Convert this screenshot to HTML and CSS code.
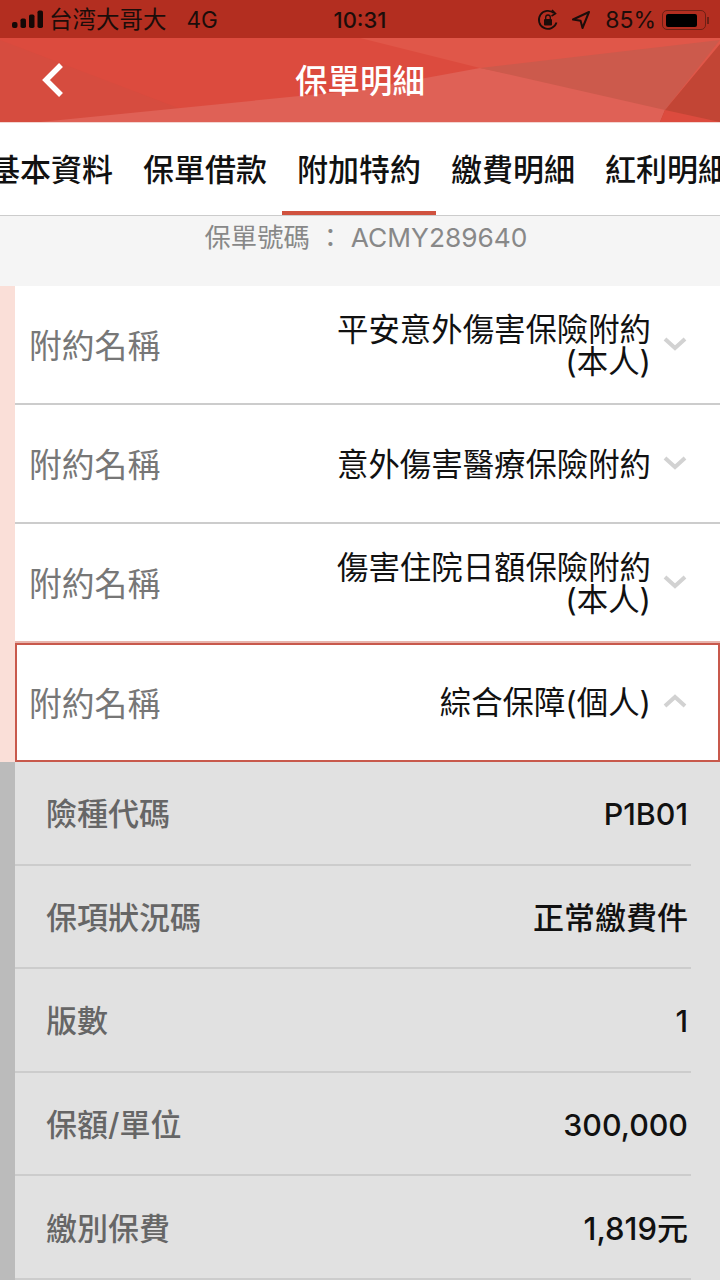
FILE: index.html
```html
<!DOCTYPE html>
<html lang="zh-Hant">
<head>
    <meta charset="UTF-8">
    <meta name="viewport" content="width=device-width, initial-scale=1.0">
    <title>保單明細</title>
    <link rel="stylesheet" href="styles.css">
</head>
<body>
    <div class="status-bar">
        <div class="status-left">
            <svg class="signal" width="32" height="20" viewBox="0 0 32 20">
                <rect x="0" y="12" width="5.5" height="6" rx="2"/>
                <rect x="8.5" y="8.5" width="5.5" height="9.5" rx="1.8"/>
                <rect x="17" y="4.5" width="5.5" height="13.5" rx="1.8"/>
                <rect x="25.5" y="0.5" width="5.5" height="17.5" rx="1.8"/>
            </svg>
            <span class="carrier">台湾大哥大</span>
            <span class="network">4G</span>
        </div>
        <div class="status-time">10:31</div>
        <div class="status-right">
            <svg width="22" height="22" viewBox="0 0 22 22" fill="none" stroke="#1c0d0a" stroke-width="1.8">
                <path d="M19.5 13.5A9 9 0 1 1 17 4.2"/>
                <path d="M15 1l3.5 3.6L14.5 7" stroke-width="1.6"/>
                <rect x="7" y="10" width="8" height="6.5" rx="1" fill="#1c0d0a" stroke="none"/>
                <path d="M8.7 10V8.3a2.3 2.3 0 0 1 4.6 0V10" stroke-width="1.3"/>
            </svg>
            <svg class="arrow" width="20" height="20" viewBox="0 0 20 20" fill="none" stroke="#1c0d0a" stroke-width="2" stroke-linejoin="round">
                <path d="M18 2L2 9.5l7.6 1.2L11.5 18z"/>
            </svg>
            <span class="battery-pct">85%</span>
            <div class="battery"><div class="battery-fill"></div></div>
            <div class="battery-tip"></div>
        </div>
    </div>

    <header class="app-header">
        <svg class="header-bg" width="720" height="84" viewBox="0 0 720 84">
            <polygon points="0,2 215,84 40,84 0,84" fill="#d64c3f"/>
            <polygon points="360,0 720,0 720,80 480,30" fill="#e05749"/>
            <polygon points="40,84 360,52 480,30 720,78 720,84" fill="#df6156"/>
            <polygon points="480,30 720,2 665,72" fill="#cc5a4c"/>
            <polygon points="720,6 665,72 660,84 720,84" fill="#c24535"/>
            <polygon points="665,72 720,84 660,84" fill="#dc4b3e"/>
        </svg>
        <svg class="back" width="26" height="36" viewBox="0 0 26 36" fill="none" stroke="#fff" stroke-width="5.5">
            <path d="M21 3L6 18l15 15"/>
        </svg>
        <h1 class="title">保單明細</h1>
    </header>

    <nav class="tabs">
        <div class="tab">基本資料</div>
        <div class="tab">保單借款</div>
        <div class="tab active">附加特約</div>
        <div class="tab">繳費明細</div>
        <div class="tab">紅利明細</div>
    </nav>

    <div class="policy-no">保單號碼 ： ACMY289640</div>

    <div class="rider-list">
        <div class="rider">
            <div class="rider-label">附約名稱</div>
            <div class="rider-value">平安意外傷害保險附約<br>(本人)</div>
            <svg class="chevron" width="24" height="14" viewBox="0 0 24 14"><path d="M2 2l10 9 10-9"/></svg>
        </div>
        <div class="rider">
            <div class="rider-label">附約名稱</div>
            <div class="rider-value">意外傷害醫療保險附約</div>
            <svg class="chevron" width="24" height="14" viewBox="0 0 24 14"><path d="M2 2l10 9 10-9"/></svg>
        </div>
        <div class="rider before-open">
            <div class="rider-label">附約名稱</div>
            <div class="rider-value">傷害住院日額保險附約<br>(本人)</div>
            <svg class="chevron" width="24" height="14" viewBox="0 0 24 14"><path d="M2 2l10 9 10-9"/></svg>
        </div>
        <div class="rider open">
            <div class="rider-label">附約名稱</div>
            <div class="rider-value">綜合保障(個人)</div>
            <svg class="chevron" width="24" height="14" viewBox="0 0 24 14"><path d="M2 12l10-9 10 9"/></svg>
        </div>
    </div>

    <div class="details">
        <div class="detail-row"><span class="detail-label">險種代碼</span><span class="detail-value num">P1B01</span></div>
        <div class="detail-row"><span class="detail-label">保項狀況碼</span><span class="detail-value">正常繳費件</span></div>
        <div class="detail-row"><span class="detail-label">版數</span><span class="detail-value num">1</span></div>
        <div class="detail-row"><span class="detail-label">保額/單位</span><span class="detail-value num">300,000</span></div>
        <div class="detail-row"><span class="detail-label">繳別保費</span><span class="detail-value">1,819元</span></div>
    </div>
</body>
</html>
```

FILE: styles.css
```css
html, body {
    margin: 0;
    padding: 0;
}

body {
    width: 720px;
    height: 1280px;
    overflow: hidden;
    background: #fff;
    font-family: Inter, "Noto Sans CJK TC", sans-serif;
}

.status-bar {
    height: 38px;
    background: #b32e20;
    color: #1c0d0a;
    display: grid;
    grid-template-columns: 1fr auto 1fr;
    align-items: center;
    padding: 2px 12px 0;
    box-sizing: border-box;
}

.status-left {
    display: flex;
    align-items: center;
}

.signal { fill: #140806; }

.carrier {
    font-size: 23.5px;
    margin-left: 5px;
    line-height: 36px;
}

.network {
    font-size: 22.5px;
    margin-left: 20px;
    line-height: 36px;
}

.status-time {
    font-size: 22px;
    font-weight: 500;
}

.status-right {
    display: flex;
    align-items: center;
    justify-content: flex-end;
    margin-right: -1px;
}

.arrow { margin-left: 12px; }

.battery-pct {
    font-size: 23px;
    margin-left: 14px;
}

.battery {
    width: 44px;
    height: 20px;
    margin-left: 6px;
    box-sizing: border-box;
    border: 1.5px solid #6e2015;
    border-radius: 5px;
    padding: 2.5px;
}

.battery-fill {
    width: 85%;
    height: 100%;
    background: #000;
    border-radius: 2px;
}

.battery-tip {
    width: 2px;
    height: 7px;
    margin-left: 1px;
    background: #6e2015;
}

.app-header {
    position: relative;
    height: 84px;
    background: #dc4b3e;
    border-bottom: 1px solid #f3d6d2;
    display: flex;
    align-items: center;
    justify-content: center;
    overflow: hidden;
}

.header-bg {
    position: absolute;
    left: 0;
    top: 0;
}

.back {
    position: absolute;
    left: 40px;
    top: 24px;
}

.title {
    position: relative;
    margin: 0;
    padding-top: 4px;
    color: #fff;
    font-size: 32.5px;
    font-weight: 500;
    line-height: 80px;
}

.tabs {
    height: 92px;
    display: flex;
    border-bottom: 1px solid #ccc;
    margin-left: -26px;
    overflow: hidden;
}

.tab {
    flex: none;
    width: 124px;
    padding: 0 15px;
    margin-bottom: -1px;
    font-size: 31px;
    font-weight: 500;
    line-height: 94px;
    color: #111;
    white-space: nowrap;
    text-align: center;
    box-sizing: content-box;
    height: 88px;
}

.tab.active {
    border-bottom: 4px solid #d0523f;
}

.policy-no {
    height: 70px;
    box-sizing: border-box;
    padding-left: 12px;
    background: #f5f5f5;
    color: #888;
    font-size: 26.3px;
    line-height: 44px;
    text-align: center;
}

.rider-list {
    border-left: 15px solid #fadfd8;
}

.rider {
    height: 119px;
    box-sizing: border-box;
    display: flex;
    align-items: center;
    padding: 0 33px 2px 14px;
    border-bottom: 2px solid #ccc;
    background: #fff;
}

.rider.before-open {
    border-bottom-color: #e8b5ad;
}

.rider.open {
    border: 2px solid #c8594c;
    padding: 0 31px 3px 12px;
}

.rider-label {
    flex: none;
    font-size: 32.8px;
    color: #777;
}

.rider-value {
    flex: 1;
    padding-top: 4px;
    text-align: right;
    font-size: 31.4px;
    line-height: 32px;
    color: #111;
}

.chevron {
    flex: none;
    margin-left: 12px;
    fill: none;
    stroke: #d2d2d2;
    stroke-width: 4;
}

.details {
    height: 518px;
    background: #e1e1e1;
    border-left: 15px solid #bbb;
}

.detail-row {
    height: 103.6px;
    box-sizing: border-box;
    margin-right: 29px;
    padding: 0 3px 2px 31px;
    display: flex;
    align-items: center;
    justify-content: space-between;
    border-bottom: 2px solid #ccc;
}

.detail-label {
    font-size: 31px;
    font-weight: 500;
    color: #666;
}

.detail-value {
    font-size: 31px;
    font-weight: 500;
    color: #111;
}

.detail-value.num {
    padding-top: 4px;
    font-size: 30.4px;
}
```
